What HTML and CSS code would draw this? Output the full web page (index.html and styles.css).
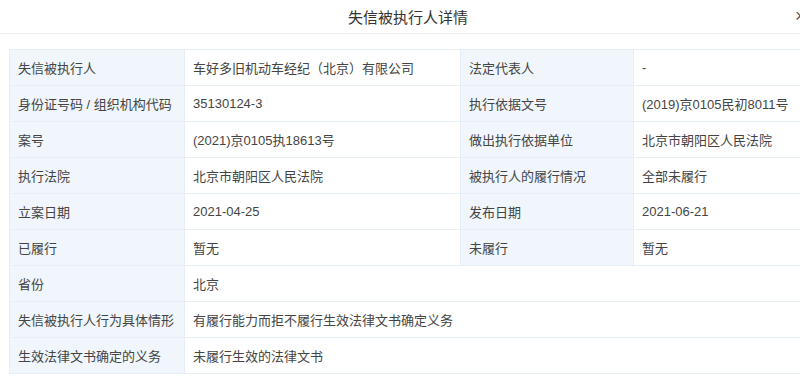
FILE: index.html
```html
<!DOCTYPE html>
<html lang="zh">
<head>
<meta charset="utf-8">
<link rel="stylesheet" href="styles.css">
</head>
<body>
<div class="dialog">
  <div class="header">
    <span class="title">失信被执行人详情</span>
    <span class="close">×</span>
  </div>
  <div class="body">
    <table class="detail">
      <colgroup>
        <col class="c1"><col class="c2"><col class="c3"><col class="c4">
      </colgroup>
      <tr><td class="lb">失信被执行人</td><td>车好多旧机动车经纪（北京）有限公司</td><td class="lb">法定代表人</td><td>-</td></tr>
      <tr><td class="lb">身份证号码 / 组织机构代码</td><td>35130124-3</td><td class="lb">执行依据文号</td><td>(2019)京0105民初8011号</td></tr>
      <tr><td class="lb">案号</td><td>(2021)京0105执18613号</td><td class="lb">做出执行依据单位</td><td>北京市朝阳区人民法院</td></tr>
      <tr><td class="lb">执行法院</td><td>北京市朝阳区人民法院</td><td class="lb">被执行人的履行情况</td><td>全部未履行</td></tr>
      <tr><td class="lb">立案日期</td><td>2021-04-25</td><td class="lb">发布日期</td><td>2021-06-21</td></tr>
      <tr><td class="lb">已履行</td><td>暂无</td><td class="lb">未履行</td><td>暂无</td></tr>
      <tr><td class="lb">省份</td><td colspan="3">北京</td></tr>
      <tr><td class="lb">失信被执行人行为具体情形</td><td colspan="3">有履行能力而拒不履行生效法律文书确定义务</td></tr>
      <tr><td class="lb">生效法律文书确定的义务</td><td colspan="3">未履行生效的法律文书</td></tr>
    </table>
  </div>
</div>
</body>
</html>
```

FILE: styles.css
```css
html, body {
  margin: 0;
  padding: 0;
  overflow: hidden;
  background: #fff;
}
body {
  font-family: "Liberation Sans", "Noto Sans CJK SC", sans-serif;
  color: #444;
}
.dialog {
  width: 816px;
}
.header {
  position: relative;
  height: 33px;
  border-bottom: 1px solid #eef0f3;
  display: flex;
  align-items: center;
  justify-content: center;
}
.title {
  font-size: 15px;
  color: #333;
}
.close {
  position: absolute;
  left: 795px;
  top: 6px;
  font-size: 18px;
  line-height: 20px;
  color: #555;
}
.body {
  padding: 15px 9px 0 9px;
}
.detail {
  width: 900px;
  border-collapse: collapse;
  table-layout: fixed;
  font-size: 13px;
}
.c1 { width: 175px; }
.c2 { width: 276px; }
.c3 { width: 173px; }
.c4 { width: 276px; }
.detail td {
  height: 36px;
  padding: 0 8px;
  border: 1px solid #e6eef6;
  color: #444;
  white-space: nowrap;
  box-sizing: border-box;
}
.detail td.lb {
  background: #f0f6fc;
}
```
